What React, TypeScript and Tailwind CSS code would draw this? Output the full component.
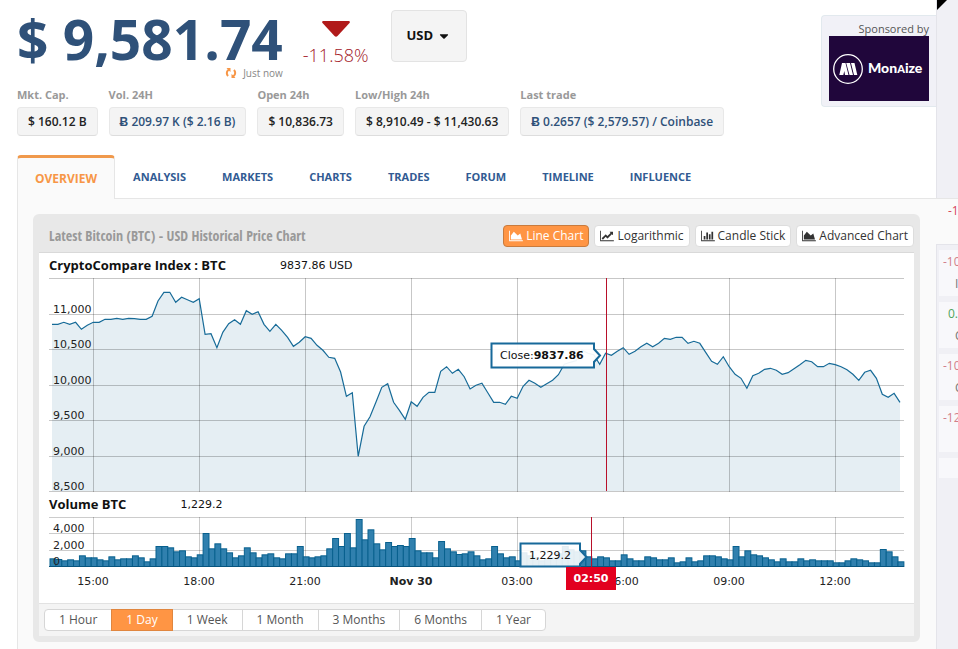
import { FaCaretDown } from 'react-icons/fa';

interface Stat {
  label: string;
  value: string;
  link?: boolean;
}

const stats: Stat[] = [
  { label: 'Mkt. Cap.', value: '$ 160.12 B' },
  { label: 'Vol. 24H', value: 'Ƀ 209.97 K ($ 2.16 B)', link: true },
  { label: 'Open 24h', value: '$ 10,836.73' },
  { label: 'Low/High 24h', value: '$ 8,910.49 - $ 11,430.63' },
  { label: 'Last trade', value: 'Ƀ 0.2657 ($ 2,579.57) / Coinbase', link: true },
];

const tabs = ['Analysis', 'Markets', 'Charts', 'Trades', 'Forum', 'Timeline', 'Influence'];

// 2048x1792 icon outlines, all share the same L-shaped axis
const AXIS = 'M2048 1536v128H0V128h128v1408z';
const AREA_ICON = `${AXIS}M1664 512l256 896H256V832l448-576 576 576z`;
const LINE_ICON = `${AXIS}M1920 288v435q0 21-19.5 29.5t-35.5-7.5l-121-121-633 633q-10 10-23 10t-23-10l-233-233-416 416-192-192 585-585q10-10 23-10t23 10l233 233 464-464-121-121q-16-16-7.5-35.5t29.5-19.5h435q14 0 23 9t9 23z`;
const BAR_ICON = `${AXIS}M640 896v512H384V896zM1024 384v1024H768V384zM1408 640v768h-256V640zM1792 256v1152h-256V256z`;

const chartTypes = [
  { name: 'Line Chart', icon: AREA_ICON, active: true },
  { name: 'Logarithmic', icon: LINE_ICON },
  { name: 'Candle Stick', icon: BAR_ICON },
  { name: 'Advanced Chart', icon: AREA_ICON },
];

const ranges = ['1 Hour', '1 Day', '1 Week', '1 Month', '3 Months', '6 Months', '1 Year'];

const movers = [
  { change: '-10', name: 'I' },
  { change: '0.', name: 'C', up: true },
  { change: '-10', name: 'C' },
  { change: '-12', name: '' },
];

// One sample every 10 minutes, in thirds of a chart unit below the top line
const prices = [
  163, 163, 157, 163, 157, 178, 166, 157, 157, 148, 148, 145, 148, 145, 146, 148, 148, 139, 93, 67,
  67, 97, 82, 89, 97, 86, 193, 191, 233, 187, 161, 149, 163, 122, 133, 125, 163, 184, 163, 181,
  202, 229, 217, 200, 205, 226, 241, 262, 265, 306, 379, 368, 559, 469, 440, 397, 352, 341, 397, 421,
  448, 395, 409, 382, 367, 367, 304, 290, 310, 298, 320, 357, 346, 340, 368, 397, 397, 403, 379, 385,
  349, 331, 340, 352, 341, 331, 314, 283, 277, 272, 240, 250, 254, 283, 250, 256, 244, 233, 253, 244,
  230, 220, 230, 220, 205, 208, 202, 202, 220, 214, 220, 247, 274, 283, 260, 290, 313, 325, 355, 317,
  310, 298, 295, 301, 313, 308, 296, 284, 271, 275, 290, 290, 280, 284, 290, 299, 313, 331, 307, 301,
  325, 373, 382, 370, 397,
].map((v) => v / 3 - 8);

const volumes = [
  205, 207, 211, 208, 211, 196, 202, 202, 208, 211, 199, 208, 205, 205, 196, 202, 214, 205, 168, 168,
  172, 184, 181, 199, 202, 193, 129, 175, 160, 175, 187, 202, 196, 172, 187, 202, 193, 190, 202, 205,
  190, 190, 168, 199, 202, 199, 196, 175, 144, 168, 129, 172, 87, 148, 118, 160, 178, 156, 168, 165,
  168, 144, 181, 187, 187, 202, 153, 175, 184, 192, 190, 184, 196, 208, 205, 168, 190, 202, 199, 211,
  187, 196, 202, 211, 205, 202, 190, 168, 178, 184, 181, 199, 205, 199, 202, 211, 211, 193, 205, 211,
  211, 199, 202, 208, 208, 202, 217, 214, 202, 214, 211, 196, 196, 199, 205, 208, 168, 199, 181, 193,
  196, 202, 208, 214, 205, 214, 214, 205, 211, 208, 211, 211, 211, 217, 217, 211, 205, 208, 211, 217,
  217, 177, 184, 199, 214,
].map((v) => (v - 81) / 3);

const STEP = 106 / 18;
const times = ['15:00', '18:00', '21:00', 'Nov 30', '03:00', '06:00', '09:00', '12:00'];
const timeX = (i: number) => 54 + i * 106;

const priceTicks = [
  { y: 36, label: '11,000' },
  { y: 71, label: '10,500' },
  { y: 107, label: '10,000' },
  { y: 142, label: '9,500' },
  { y: 178, label: '9,000' },
  { y: 213, label: '8,500' },
];

const volumeTicks = [
  { y: 16, label: '4,000' },
  { y: 33, label: '2,000' },
  { y: 49, label: '0' },
];

function PriceChart() {
  const line = prices.map((y, i) => `${(13 + i * STEP).toFixed(1)},${y.toFixed(1)}`).join(' ');
  return (
    <svg
      viewBox="0 0 875 214"
      className="block w-full overflow-visible font-['DejaVu_Sans',sans-serif] text-[11px]"
      role="img"
      aria-label="Price"
    >
      <polygon points={`13,213 ${line} 861,213`} fill="#e5eef3" />
      <g stroke="#000" strokeOpacity="0.22" shapeRendering="crispEdges">
        <line x1="10" x2="865" y1="0.5" y2="0.5" />
        {priceTicks.map((t) => (
          <line key={t.label} x1="10" x2="865" y1={t.y + 0.5} y2={t.y + 0.5} />
        ))}
        {times.map((t, i) => (
          <line key={t} x1={timeX(i) + 0.5} x2={timeX(i) + 0.5} y1="0" y2="214" />
        ))}
      </g>
      <polyline points={line} fill="none" stroke="#176b98" strokeWidth="1.2" />
      {priceTicks.map((t) => (
        <text key={t.label} x="14" y={t.y - 1} fill="#222">{t.label}</text>
      ))}
      <rect x="567" y="0" width="1" height="213" fill="#b8102a" />
      <path
        d="M452.5 65.5H555V71L561 77.5L555 84V89.5H452.5z"
        fill="#fff"
        fillOpacity="0.93"
        stroke="#17699a"
        strokeWidth="2"
      />
      <text x="461" y="81" fill="#111">
        Close:<tspan fontWeight="bold">9837.86</tspan>
      </text>
    </svg>
  );
}

function VolumeChart() {
  return (
    <svg
      viewBox="0 0 875 86"
      className="block w-full overflow-visible font-['DejaVu_Sans',sans-serif] text-[11px]"
      role="img"
      aria-label="Volume"
    >
      <g stroke="#000" strokeOpacity="0.2" shapeRendering="crispEdges">
        <line x1="10" x2="865" y1="0.5" y2="0.5" />
        <line x1="10" x2="865" y1="16.5" y2="16.5" />
        <line x1="10" x2="865" y1="33.5" y2="33.5" />
        {times.map((t, i) => (
          <line key={t} x1={timeX(i) + 0.5} x2={timeX(i) + 0.5} y1="0" y2="49" />
        ))}
      </g>
      {volumes.map((y, i) => (
        <rect
          key={i}
          x={11 + i * STEP}
          y={y + 0.5}
          width={STEP}
          height={49 - y}
          fill="#3080ae"
          stroke="#08608e"
        />
      ))}
      <line x1="10" x2="865" y1="49.5" y2="49.5" stroke="#08557f" />
      {volumeTicks.map((t) => (
        <text key={t.label} x="14" y={t.y - 1} fill="#222">{t.label}</text>
      ))}
      {times.map((t, i) => (
        <text
          key={t}
          x={timeX(i)}
          y="68"
          textAnchor="middle"
          fill="#222"
          fontWeight={t.startsWith('Nov') ? 'bold' : undefined}
        >
          {t}
        </text>
      ))}
      <rect x="552" y="0" width="1" height="50" fill="#b8102a" />
      <path
        d="M481.5 26.5H541V33L547.5 40L541 47V49.5H481.5z"
        fill="#fff"
        fillOpacity="0.88"
        stroke="#17699a"
        strokeWidth="2"
      />
      <text x="490" y="42" fill="#111">1,229.2</text>
      <rect x="527" y="50" width="50" height="23" fill="#e2001f" />
      <text x="552" y="65" textAnchor="middle" fill="#fff" fontWeight="bold">02:50</text>
    </svg>
  );
}

function PriceSummary() {
  return (
    <div className="flex items-start">
      <div>
        <h1 className="text-[55px]/[58px] font-bold text-[#2f5179]">$ 9,581.74</h1>
        <p className="flex h-2.5 items-center justify-end gap-1.5 text-[10px]/[10px] text-[#888]">
          <svg viewBox="0 0 12 12" className="size-3" fill="#f79646" aria-hidden="true">
            <path d="M5.500 1H1.500L2.700 2.300Q0.800 4 0.800 6T2.300 9.800L3.800 8.300Q2.800 7.200 2.800 6T4 3.700L5.500 5z" />
            <path d="M6.500 11H10.500L9.300 9.700Q11.200 8 11.200 6T9.700 2.200L8.200 3.700Q9.200 4.800 9.200 6T8 8.300L6.500 7z" />
          </svg>
          Just now
        </p>
      </div>
      <div className="ml-5 flex flex-col items-center pt-[11px] text-[#a32029]">
        <svg viewBox="0 0 28 16" className="h-4 w-7" aria-hidden="true">
          <path d="M1 0H27Q28.500 0.500 27.500 2L15.500 15Q14 16.500 12.500 15L0.500 2Q-0.500 0.500 1 0z" fill="#b11a1a" />
        </svg>
        <span className="mt-1.5 text-[18px]/[24px] font-light">-11.58%</span>
      </div>
      <button className="ml-[22px] flex h-[52px] items-center gap-1 rounded-sm border border-[#e3e3e3] bg-[#f4f4f4] px-[15px] text-[13px] font-bold text-[#111]">
        USD
        <FaCaretDown className="size-3.5" />
      </button>
    </div>
  );
}

function StatList() {
  return (
    <dl className="mt-[9px] flex gap-[11px]">
      {stats.map((s) => (
        <div key={s.label}>
          <dt className="text-[11px]/[16px] font-bold text-[#999]">{s.label}</dt>
          <dd
            className={`mt-1 rounded-sm border border-b-[#ddd] border-[#e8e8e8] bg-[#f4f4f4] px-2.5 py-[5px] text-[12px]/[17px] font-semibold whitespace-nowrap ${
              s.link ? 'text-[#2f5179]' : 'text-[#222]'
            }`}
          >
            {s.value}
          </dd>
        </div>
      ))}
    </dl>
  );
}

function Sponsor() {
  return (
    <a
      href="#sponsor"
      className="mt-[5px] ml-auto flex flex-col rounded-l-sm border border-r-0 border-[#e2e9ee] bg-[#f1f1f7] px-[7px] py-[5px] text-[#555]"
    >
      <span className="text-right text-[11px]/[15px]">Sponsored by</span>
      <span className="flex h-[65px] w-[100px] items-center gap-[5px] bg-[#20063b] pl-1 text-white">
        <svg viewBox="0 0 30 30" className="size-[30px]" fill="#fff" aria-hidden="true">
          <circle cx="15" cy="15" r="14.3" fill="none" stroke="#fff" strokeWidth="1.3" />
          <path d="M9 9H12.500L15.500 21H12L11.300 17L10.300 21H6.300zM13.200 9H17L20 21H16.500zM18 9H21.500L24.300 21H21z" />
        </svg>
        <span className="font-['Lato',sans-serif] text-[14px]/[18px] font-black">
          Mon<span className="text-[11px]">A</span>ize
        </span>
      </span>
    </a>
  );
}

function Tabs() {
  return (
    <nav className="mt-[19px] flex items-stretch pl-[17px] uppercase">
      <a
        href="#overview"
        className="h-11 rounded-t-sm border-x border-t-[3px] border-x-[#e6e6e6] border-t-[#f0994c] bg-[#fafafa] px-[17px] pt-3 text-[12px]/[18px] font-bold text-[#f79646]"
      >
        Overview
      </a>
      <div className="flex flex-1 border-b border-[#e6e6e6]">
        {tabs.map((t) => (
          <a key={t} href={`#${t.toLowerCase()}`} className="px-[18px] pt-[13px] text-[11px]/[18px] font-bold text-[#315b93]">
            {t}
          </a>
        ))}
      </div>
    </nav>
  );
}

function ChartTitle({ title, value }: { title: string; value: string }) {
  return (
    <div className="flex h-[25px] items-center gap-[54px] pl-2.5 text-[#111]">
      <h3 className="text-[13px] font-bold">{title}</h3>
      <span className="pt-0.5 font-['DejaVu_Sans',sans-serif] text-[11px]">{value}</span>
    </div>
  );
}

function ChartPanel() {
  return (
    <section className="overflow-hidden rounded-md border-[6px] border-[#e8e8e8] bg-white">
      <div className="flex h-[33px] items-center border-b border-[#d9d9d9] bg-[#e8e8e8] pl-2.5">
        <h2 className="font-['Open_Sans_Condensed','Liberation_Sans_Narrow',sans-serif] text-sm font-bold text-[#999]">
          Latest Bitcoin (BTC) - USD Historical Price Chart
        </h2>
        <div className="ml-auto flex gap-[5px]">
          {chartTypes.map((c) => (
            <button
              key={c.name}
              className={`flex h-[22px] items-center gap-[3px] rounded-sm border px-[5px] text-[12px]/[18px] whitespace-nowrap ${
                c.active ? 'border-[#c97b3d] bg-[#ff9544] text-white' : 'border-[#ddd] bg-white text-[#333]'
              }`}
            >
              <svg viewBox="0 0 2048 1792" className="h-3 w-3.5" fill="currentColor" aria-hidden="true">
                <path d={c.icon} />
              </svg>
              {c.name}
            </button>
          ))}
        </div>
      </div>
      <ChartTitle title="CryptoCompare Index : BTC" value="9837.86 USD" />
      <PriceChart />
      <ChartTitle title="Volume BTC" value="1,229.2" />
      <VolumeChart />
      <div className="flex border-t border-[#e2e2e2] bg-[#f4f4f4] px-[5px] py-[5px]">
        {ranges.map((r) => (
          <button
            key={r}
            className={`-mr-px h-[22px] border px-3.5 text-[12px]/[18px] first:rounded-l-sm last:rounded-r-sm ${
              r === '1 Day' ? 'relative border-[#e0863f] bg-[#ff9544] text-white' : 'border-[#d6d6d6] bg-white text-[#555]'
            }`}
          >
            {r}
          </button>
        ))}
      </div>
    </section>
  );
}

function Movers() {
  return (
    <aside className="flex w-[22px] shrink-0 flex-col overflow-hidden bg-[#f0f0f5] text-[12px]/[18px]">
      <div className="h-[198px] border-l border-[#e4e4ea]">
        <svg viewBox="0 0 10 10" className="size-2.5" aria-hidden="true">
          <path d="M0 0H10L0 10z" />
        </svg>
      </div>
      <div className="h-[46px] border-t border-[#e6e6e6] bg-[#fafafa] pt-[3px] pl-3 text-[#d6455a]">-1</div>
      <div className="flex flex-1 flex-col gap-1.5 border-t border-l border-[#e4e4ea] pt-[5px] pl-[2px]">
        {movers.map((m, i) => (
          <div key={i} className="h-[46px] bg-[#f8f8fb] pt-[3px] pl-1">
            <div className={`whitespace-nowrap ${m.up ? 'pl-[5px] text-[#4fa45c]' : 'text-[#d17f8a]'}`}>{m.change}</div>
            <div className="mt-1 pl-[12px] text-[#777]">{m.name}</div>
          </div>
        ))}
        <div className="h-5 bg-[#f8f8fb]" />
      </div>
    </aside>
  );
}

export default function App() {
  return (
    <div className="flex min-h-screen overflow-hidden bg-white font-['Open_Sans',sans-serif]">
      <main className="flex min-w-0 flex-1 flex-col">
        <header className="flex items-start pt-2.5 pl-[17px]">
          <div>
            <PriceSummary />
            <StatList />
          </div>
          <Sponsor />
        </header>
        <Tabs />
        <div className="ml-[17px] flex-1 border-l border-[#e6e6e6] bg-[#fafafa] pt-[15px] pr-4 pb-[7px] pl-[15px]">
          <ChartPanel />
        </div>
      </main>
      <Movers />
    </div>
  );
}
